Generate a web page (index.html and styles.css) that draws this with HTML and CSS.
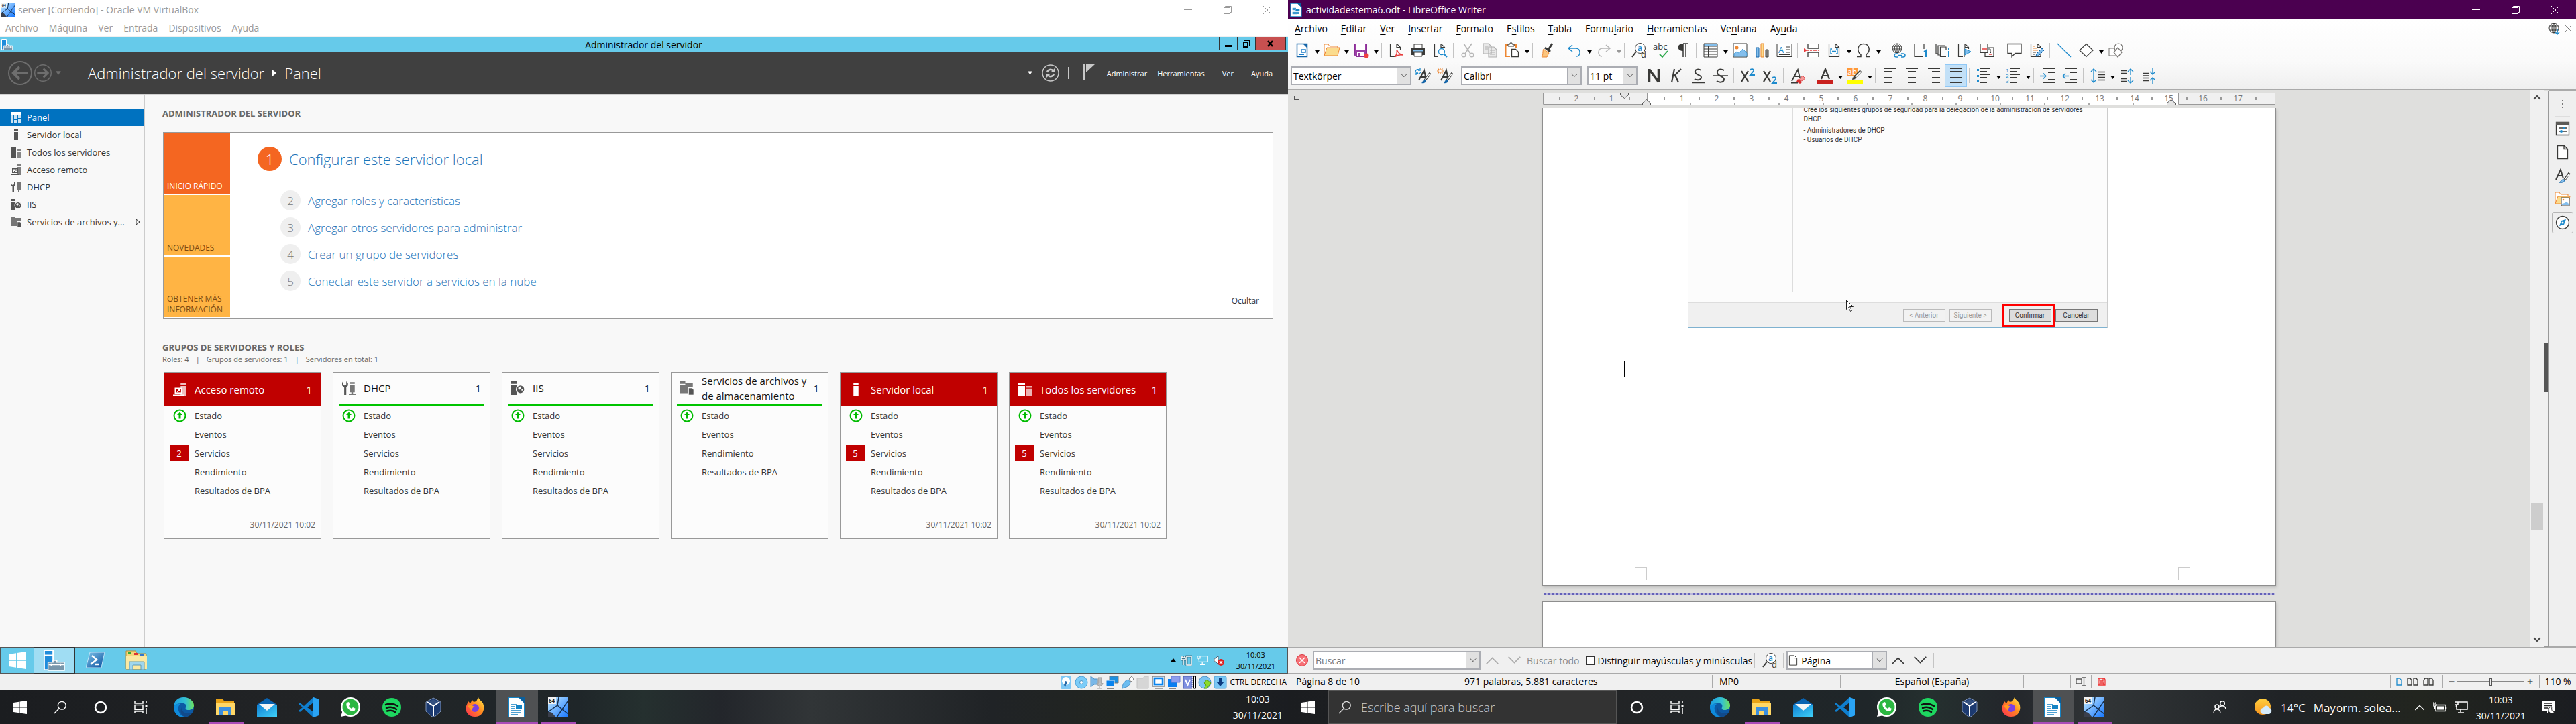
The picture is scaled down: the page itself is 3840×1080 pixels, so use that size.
FILE: index.html
```html
<!DOCTYPE html>
<html lang="es">
<head>
<meta charset="utf-8">
<title>Escritorio</title>
<link rel="stylesheet" href="styles.css">
</head>
<body>
<svg class="sprite" aria-hidden="true">
<defs>
<linearGradient id="gEdge" x1="0" y1="0" x2="1" y2="0"><stop offset="0" stop-color="#1b9de2"/><stop offset=".6" stop-color="#35c1d0"/><stop offset="1" stop-color="#6fe35a"/></linearGradient>
<linearGradient id="gFox" x1="1" y1="0" x2="0" y2="1"><stop offset="0" stop-color="#fff14a"/><stop offset=".45" stop-color="#ff8a1f"/><stop offset="1" stop-color="#ff2a55"/></linearGradient>
<linearGradient id="gSky" x1="0" y1="0" x2="1" y2="1"><stop offset="0" stop-color="#c6ecff"/><stop offset="1" stop-color="#1677ff"/></linearGradient>
<linearGradient id="gMail" x1="0" y1="0" x2="1" y2="1"><stop offset="0" stop-color="#0f7fd4"/><stop offset="1" stop-color="#3fd0f7"/></linearGradient>
<linearGradient id="gSun" x1="0" y1="0" x2="0" y2="1"><stop offset="0" stop-color="#ffcf3f"/><stop offset="1" stop-color="#f7941d"/></linearGradient>
<linearGradient id="gPs" x1="0" y1="0" x2="1" y2="1"><stop offset="0" stop-color="#7fc4ea"/><stop offset="1" stop-color="#0a4f9e"/></linearGradient>
</defs>
<symbol id="min" viewBox="0 0 12 12"><path d="M0 5.500h12" stroke="currentColor"/></symbol>
<symbol id="restore" viewBox="0 0 12 12"><path d="M.5 2.500h9v9h-9zM2.500 2.500v-2h9v9h-2" fill="none" stroke="currentColor"/></symbol>
<symbol id="close" viewBox="0 0 12 12"><path d="M0 0l12 12M12 0L0 12" stroke="currentColor" fill="none"/></symbol>
<symbol id="down" viewBox="0 0 12 8"><path d="M1 1l5 5 5-5" fill="none" stroke="currentColor"/></symbol>
<symbol id="up" viewBox="0 0 12 8"><path d="M1 7l5-5 5 5" fill="none" stroke="currentColor"/></symbol>
<symbol id="caret" viewBox="0 0 8 5"><path d="M0 0h7L3.500 5z" fill="currentColor"/></symbol>
<symbol id="vb64" viewBox="0 0 30 30"><rect width="30" height="30" fill="url(#gSky)"/><path d="M0 21l6 2 6 7H0z" fill="#3a3f4c"/><path d="M16 0l-2 12 7 6L30 5M14 12L0 22M21 18l-8 12M21 18l9 7" stroke="#16304f" stroke-width="1.500" fill="none"/><path d="M0 0h12v10H0z" fill="#f2f2f2"/><text x="1" y="8" font-size="8" font-weight="700" fill="#222">64</text></symbol>
<symbol id="srvmgr" viewBox="0 0 34 34"><path d="M1 1h14v31H1z" fill="#1f8cdb" stroke="#fff" stroke-width="2"/><path d="M1 9h14" stroke="#fff" stroke-width="2"/><path d="M7 20h8v-3h6v3h12v13H7z" fill="#7896ab" stroke="#fff" stroke-width="1.500"/><path d="M8 24h24M12 22v4M27 22v4" stroke="#fff" stroke-width="1.500"/></symbol>
<symbol id="panel" viewBox="0 0 16 16"><path d="M0 0h16v4H0z" fill="currentColor"/><path d="M0 5h4v5H0zM0 11h4v5H0zM5 5h5v6H5zM5 12h5v4H5zM11 5h5v4h-5zM11 10h5v6h-5z" fill="currentColor" opacity=".8"/></symbol>
<symbol id="local" viewBox="0 0 16 16"><path d="M5 0h6v3H5zM5 4h6v12H5z" fill="currentColor"/></symbol>
<symbol id="todos" viewBox="0 0 16 16"><path d="M0 0h8v3H0zM0 4h8v12H0z" fill="currentColor"/><path d="M9 4h7v2H9zM9 7h7v9H9z" fill="currentColor" opacity=".7"/></symbol>
<symbol id="remoto" viewBox="0 0 16 16"><path d="M9 0h7v3H9zM9 4h7v12H9z" fill="currentColor" opacity=".75"/><path d="M2 6h9v7H2zM0 14h13v2H0z" fill="currentColor"/><path d="M3.500 7.500h6v4h-6z" fill="var(--hole)"/><path d="M5 11l3-3M6 8h2v2" stroke="currentColor" fill="none"/></symbol>
<symbol id="dhcp" viewBox="0 0 16 16"><path d="M1 0v4l2 1 2-1V0l2 2v3L5 7v9H2.500V7L0 5V2z" fill="currentColor"/><path d="M9 1h6v2H9zM9 4h6v9H9zM11 13h2v2h3v1H8v-1h3z" fill="currentColor" opacity=".8"/></symbol>
<symbol id="iis" viewBox="0 0 16 16"><path d="M0 0h7v3H0zM0 4h7v12H0z" fill="currentColor"/><circle cx="11" cy="9.500" r="5" fill="currentColor" stroke="var(--hole)"/><path d="M8 8l3-2 1 2-2 2zM12 10l2-1-1 3z" fill="var(--hole)"/></symbol>
<symbol id="files" viewBox="0 0 16 16"><path d="M0 0h6v3H0zM0 4h6V2h9v5h-6v7H0z" fill="currentColor" opacity=".8"/><path d="M10 8h4l2 2v6h-6z" fill="currentColor" stroke="var(--hole)" stroke-width=".500"/></symbol>
<symbol id="okUp" viewBox="0 0 20 20"><circle cx="10" cy="10" r="8.500" fill="#fff" stroke="#0b0" stroke-width="2"/><path d="M10 4.500l4 4.500h-2.500v5.500h-3V9H6z" fill="#0b0"/></symbol>
<symbol id="back" viewBox="0 0 36 36"><circle cx="18" cy="18" r="17" fill="none" stroke="currentColor" stroke-width="2"/><path d="M30 18H8M17 9l-9 9 9 9" fill="none" stroke="currentColor" stroke-width="4"/></symbol>
<symbol id="refresh" viewBox="0 0 26 26"><circle cx="13" cy="13" r="12" fill="none" stroke="currentColor" stroke-width="1.500"/><path d="M8 12a5 5 0 0 1 9-2M18 14a5 5 0 0 1-9 2" fill="none" stroke="currentColor" stroke-width="2.500"/><path d="M19 6v6h-6zM7 20v-6h6z" fill="currentColor"/></symbol>
<symbol id="flag" viewBox="0 0 18 24"><path d="M1 0h3v24H1z" fill="currentColor"/><path d="M5 1h13L5 13z" fill="currentColor"/></symbol>
<symbol id="win" viewBox="0 0 20 20"><path d="M0 3l8.500-1.300V9.500H0zM9.500 1.500L20 0v9.500H9.500zM0 10.500h8.500v7.800L0 17zM9.500 10.500H20V20L9.500 18.500z" fill="#fff"/></symbol>
<symbol id="ps" viewBox="0 0 28 24"><path d="M6 0h22l-5 23H0z" fill="url(#gPs)" stroke="#bfe4f7"/><path d="M9 5l7 6-9 7M14 18h6" fill="none" stroke="#fff" stroke-width="2.500"/></symbol>
<symbol id="oldfolder" viewBox="0 0 34 30"><path d="M1 1h14l2 4h14v23H1z" fill="#f5d77a" stroke="#b98e33"/><path d="M4 2h5v3H4z" fill="#3a3"/><path d="M13 4h5v3h-5z" fill="#d33"/><path d="M22 6h6v3h-6z" fill="#37c"/><path d="M1 9h31v19H1z" fill="#fbe9a2"/><path d="M6 29V17h22v12h-5v-7H11v7z" fill="#9fd6ee" stroke="#5a9ab8"/></symbol>
<symbol id="search" viewBox="0 0 22 22"><circle cx="13.500" cy="8" r="6.500" fill="none" stroke="currentColor" stroke-width="1.500"/><path d="M9 13l-8 8" stroke="currentColor" stroke-width="1.500"/></symbol>
<symbol id="cortana" viewBox="0 0 20 20"><circle cx="10" cy="10" r="8" fill="none" stroke="#fff" stroke-width="2.500"/></symbol>
<symbol id="tasks" viewBox="0 0 20 20"><path d="M1 1v3h12V1M1 19v-3h12v3M1 6.500h12v7H1zM18 0v4M18 11v9" fill="none" stroke="#fff" stroke-width="1.500"/><path d="M16.500 6h3v3h-3z" fill="#fff"/></symbol>
<symbol id="edge" viewBox="0 0 30 30"><circle cx="15" cy="15" r="15" fill="#0c59a4"/><path d="M0 15C0 5 7 0 15 0s15 6 15 12c0 5-4 7-8 7s-5-2-4-4c2-5-3-7-7-6C5 9 1 12 0 15z" fill="url(#gEdge)"/><path d="M0 15c1-4 6-6 10-5-4 3-4 8-2 12 2 5 6 7 10 7.600C8 32 0 24 0 15z" fill="#0f8bdc"/><path d="M12 15c-1 6 5 11 15 8-3 4-7 6-10 6-7-2-8-9-5-14z" fill="#114a8b"/></symbol>
<symbol id="folder" viewBox="0 0 30 30"><path d="M1 3h10l3 3h14v5H1z" fill="#e8a317"/><path d="M1 8h28v18H1z" fill="#ffd766"/><path d="M6 27V15h18v12h-5v-6h-8v6z" fill="#3b8fe0"/></symbol>
<symbol id="mail" viewBox="0 0 30 30"><path d="M0 11L15 1l15 10z" fill="#0a63b0"/><path d="M0 11h30v18H0z" fill="url(#gMail)"/><path d="M3 10h24L15 20z" fill="#f5f5f5"/></symbol>
<symbol id="vscode" viewBox="0 0 30 30"><path d="M22 0l8 3v24l-8 3L8 17l-6 5-2-2 6-5-6-5 2-2 6 5z" fill="#0f7fcf"/><path d="M22 8v14l-9-7z" fill="#1e2124"/><path d="M22 0l8 3v24l-8 3z" fill="#2aa4f4"/></symbol>
<symbol id="whats" viewBox="0 0 30 30"><circle cx="15.500" cy="14.500" r="14.500" fill="#fff"/><path d="M1 29l3-10 7 8z" fill="#fff"/><circle cx="15.500" cy="14.500" r="12" fill="#2cb742"/><path d="M10 8c-3 5 4 14 11 13l2-4-4-2-2 2c-2-1-3-3-4-4l1.500-2L13 7z" fill="#fff"/></symbol>
<symbol id="spot" viewBox="0 0 30 30"><circle cx="15" cy="15" r="14" fill="#1ed760"/><path d="M6 11c6-2 13-1 18 2M7 16c5-2 11-1 15 2M8 20.500c4-1 9-1 12 1.500" fill="none" stroke="#111" stroke-width="2.500" stroke-linecap="round"/></symbol>
<symbol id="vbox" viewBox="0 0 30 30"><path d="M15 1l11 6v14l-9 8h-4l-9-8V7z" fill="#1c3a70" stroke="#7f93b5"/><path d="M15 3l8 4-8 5-8-5z" fill="#34507f"/><path d="M15 13l9-6M15 13L6 7M15 13v15" stroke="#fff" stroke-width="2" fill="none"/></symbol>
<symbol id="fox" viewBox="0 0 30 30"><path d="M5 6l3 3 3-5 2 3 4-1 3-6c1 4 5 5 7 9 4 9-1 20-12 20C5 29 0 22 2 13z" fill="url(#gFox)"/><circle cx="15" cy="16" r="6" fill="#7a3fe0"/><path d="M4 13c5-3 8 0 11 1-3 0-4 3-5 6z" fill="#ff9a1f"/></symbol>
<symbol id="writer" viewBox="0 0 30 30"><path d="M3 0h16l8 8v22H3z" fill="#fff" stroke="#1583c4" stroke-width="2"/><path d="M18 0h9v9z" fill="#0b5f9c"/><path d="M7 11h8M7 14h5M7 17h5M7 20h15M7 23h15M7 26h10" stroke="#1583c4" stroke-width="1.500"/><path d="M14 12h9v6h-9z" fill="#1583c4"/></symbol>
<symbol id="people" viewBox="0 0 20 20"><circle cx="6" cy="9" r="3" fill="none" stroke="#fff" stroke-width="1.500"/><circle cx="14" cy="4" r="3.300" fill="none" stroke="#fff" stroke-width="1.500"/><path d="M1 19c0-8 10-8 10 0M9 10c4-4 10-2 10 3" fill="none" stroke="#fff" stroke-width="1.500"/></symbol>
<symbol id="sun" viewBox="0 0 26 26"><circle cx="12" cy="12" r="12" fill="url(#gSun)"/><path d="M13 23a4.500 4.500 0 0 1 0-9c2-5 8-4 9 0 5 1 4 9-1 9z" fill="#d5ebfb"/></symbol>
<symbol id="batt" viewBox="0 0 20 16"><path d="M4 4.500h14v9H4zM18.500 7v4" fill="none" stroke="#fff" stroke-width="1.500"/><path d="M6 6.500h10v5H6z" fill="#fff"/><path d="M1 0v3M4 0v3M0 3h5v3H0zM2.500 6v5" stroke="#fff" fill="none"/></symbol>
<symbol id="net" viewBox="0 0 20 18"><path d="M5 1h14v11H3V8M9 12v4M5 17h9M0 1h5v4H0zM2.500 5v4" fill="none" stroke="currentColor" stroke-width="1.500"/></symbol>
<symbol id="note" viewBox="0 0 20 20"><path d="M0 0h19v15h-7l-4 4v-4H0z" fill="#fff"/><path d="M4 4h11M4 7.500h11M4 11h6" stroke="#222" stroke-width="1.500"/><path d="M15 9a5 5 0 1 0 4 8c-4 0-5-4-4-8z" fill="#fff" stroke="#222"/></symbol>
<!-- iconos de Writer -->
<symbol id="w-new" viewBox="0 0 24 24"><path d="M4.500 2.500h15v19h-15z" fill="#fff" stroke="#1565a8" stroke-width="1.500"/><path d="M13 2h7v7z" fill="#1565a8"/><path d="M7 8.500h5M7 11.500h3M7 14.500h3M7 18.500h8" stroke="#1c7ec9"/><path d="M11 11h6v4h-6z" fill="none" stroke="#1c7ec9" stroke-width="1.500"/></symbol>
<symbol id="w-open" viewBox="0 0 24 24"><path d="M1 20V3h6l2 3h12v3" fill="#fff" stroke="#ed8733"/><path d="M5 8h19l-3 12H1z" fill="#fbdc8e" stroke="#ed8733"/></symbol>
<symbol id="w-save" viewBox="0 0 24 24"><path d="M2.500 2.500h18v19h-16l-2-2z" fill="#9b3fa5" stroke="#8a2f96"/><path d="M5 3h13v9H5z" fill="#fff"/><path d="M6 15h11v6H6z" fill="#fff"/><path d="M8 16h3v5H8z" fill="#9b3fa5"/><circle cx="20" cy="20" r="3.500" fill="#f04040"/></symbol>
<symbol id="w-pdf" viewBox="0 0 24 24"><path d="M10 21.500H3.500v-19h10l5 5V12M13 2.500v5h5" fill="none" stroke="#3a3a38" stroke-width="1.200"/><path d="M13 11c3 6 5 7 9 8-5-1-8 0-12 3 3-3 4-7 3-11z" fill="#fff" stroke="#e63c3c" stroke-width="1.500"/></symbol>
<symbol id="w-print" viewBox="0 0 24 24"><path d="M6 8V3h12v5" fill="#fff" stroke="#3a3a38"/><path d="M2 8h20v11H2z" fill="#3a3a38"/><path d="M5 12.500h14" stroke="#83beec" stroke-width="2"/><path d="M6 15h12v6H6z" fill="#fff" stroke="#3a3a38"/></symbol>
<symbol id="w-preview" viewBox="0 0 24 24"><path d="M9 21.500H3.500v-19h10l5 5V9M13 2.500v5h5" fill="none" stroke="#3a3a38" stroke-width="1.200"/><circle cx="14" cy="14" r="4.500" fill="#fff" stroke="#1e8bcd" stroke-width="1.300"/><path d="M17 17l5 5" stroke="#1e8bcd" stroke-width="2"/></symbol>
<symbol id="w-cut" viewBox="0 0 24 24"><path d="M6 2l10 15M18 2L8 17" stroke="#b8b8b8" stroke-width="1.700"/><circle cx="6" cy="19" r="2.800" fill="none" stroke="#b8b8b8" stroke-width="1.500"/><circle cx="18" cy="19" r="2.800" fill="none" stroke="#b8b8b8" stroke-width="1.500"/></symbol>
<symbol id="w-copy" viewBox="0 0 24 24"><path d="M2 2h8l4 4v11H2zM10 7h8l4 4v11H10z" fill="#e8e8e8" stroke="#b0b0b0" stroke-width="1.200"/><path d="M12 12h7M12 15h8M12 18h8M4 7h5M4 10h5" stroke="#b0b0b0"/></symbol>
<symbol id="w-paste" viewBox="0 0 24 24"><path d="M9 21H2.500V4H18v5" fill="#fff" stroke="#ed8733" stroke-width="2"/><path d="M6 6V3h3V1h3v2h3v3z" fill="#fff" stroke="#3a3a38"/><path d="M11.500 10.500h6l4 4v7h-10z" fill="#fff" stroke="#3a3a38" stroke-width="1.300"/></symbol>
<symbol id="w-brush" viewBox="0 0 24 24"><path d="M20 2l-6 9M9 8l8 6" stroke="#3a3a38" stroke-width="3"/><path d="M7 10l8 6-3 6H4c3-3 1-8 3-12z" fill="#fbc57e" stroke="#ed8733"/></symbol>
<symbol id="w-undo" viewBox="0 0 24 24"><path d="M9 4L3 9l6 5M4 9h10c8 0 8 12 1 12" fill="none" stroke="#1e8bcd" stroke-width="1.500"/></symbol>
<symbol id="w-redo" viewBox="0 0 24 24"><path d="M15 4l6 5-6 5M20 9H10C2 9 2 21 9 21" fill="none" stroke="#b5b5b5" stroke-width="1.500"/></symbol>
<symbol id="w-find" viewBox="0 0 24 24"><circle cx="14" cy="9" r="7.500" fill="#fff" stroke="#3a3a38"/><path d="M8 14l-6 8" stroke="#3a3a38" stroke-width="2"/><text x="10" y="13" font-size="12" fill="#1e8bcd" font-weight="600">a</text><text x="15" y="23" font-size="13" fill="#3a3a38">d</text></symbol>
<symbol id="w-abc" viewBox="0 0 24 24"><text x="0" y="11" font-size="13" fill="#3a3a38">abc</text><path d="M10 18l4 4 8-9" fill="none" stroke="#2ba84a" stroke-width="1.800"/></symbol>
<symbol id="w-pil" viewBox="0 0 24 24"><path d="M12 2h8M12 2v20M16 2v20" stroke="#3a3a38" stroke-width="1.500"/><path d="M12 2v11C2 13 2 2 12 2z" fill="#3a3a38"/></symbol>
<symbol id="w-table" viewBox="0 0 24 24"><path d="M2 2h20v4H2z" fill="#83beec"/><path d="M2 2h20v20H2zM2 6h20M2 10h20M2 14h20M2 18h20M8.500 6v16M15.500 6v16" fill="none" stroke="#3a3a38"/></symbol>
<symbol id="w-image" viewBox="0 0 24 24"><path d="M2 2h20v20H2z" fill="#fff" stroke="#3a3a38"/><circle cx="7" cy="8" r="2.500" fill="#ed8733"/><path d="M3 21v-4l4-3 3 2 6-6 6 6v5z" fill="#83beec" stroke="#1e8bcd" stroke-width=".7"/></symbol>
<symbol id="w-chart" viewBox="0 0 24 24"><path d="M3 8h4v14H3z" fill="#83beec" stroke="#1565a8"/><path d="M10 2h4v20h-4z" fill="#fbdc8e" stroke="#ed8733"/><path d="M17 11h4v11h-4z" fill="#797774" stroke="#3a3a38"/></symbol>
<symbol id="w-box" viewBox="0 0 24 24"><path d="M1 2.500h22v19H1z" fill="#fff" stroke="#3a3a38"/><text x="3" y="16" font-size="13" fill="#1e8bcd">A</text><path d="M14 7h7M14 11h7M14 15h7M4 18.500h17" stroke="#3a3a38"/></symbol>
<symbol id="w-break" viewBox="0 0 24 24"><path d="M6 2v7h16V2M6 22v-7h16v7" fill="#fff" stroke="#3a3a38" stroke-width="1.300"/><path d="M5 12h18" stroke="#e63c3c" stroke-width="1.500" stroke-dasharray="3 1"/><path d="M0 9l5 3-5 3z" fill="#e63c3c"/></symbol>
<symbol id="w-field" viewBox="0 0 24 24"><path d="M4.500 2.500h10l5 5v14h-15zM14 2.500v5h5" fill="none" stroke="#3a3a38" stroke-width="1.200"/><path d="M9 10H7v7h2M15 10h2v7h-2M9 13.500h6" fill="none" stroke="#1e8bcd" stroke-width="1.300"/></symbol>
<symbol id="w-omega" viewBox="0 0 24 24"><path d="M2 21.500h6v-3C1 13 3 2.500 12 2.500S23 13 16 18.500v3h6" fill="none" stroke="#3a3a38" stroke-width="1.500"/></symbol>
<symbol id="w-link" viewBox="0 0 24 24"><path d="M3 9a7 7 0 1 1 14 0 7 7 0 1 1-14 0zM3.500 6h13M3 10h14M10 2v14M10 2c-5 4-5 10 0 14M10 2c5 4 5 10 0 14" fill="none" stroke="#3a3a38"/><path d="M12 17H9c-4 0-4 5 0 5h3M16 17h3c4 0 4 5 0 5h-3M11 19.500h6" fill="none" stroke="#1e8bcd" stroke-width="1.500"/></symbol>
<symbol id="w-foot" viewBox="0 0 24 24"><path d="M17 10V2.500H3v19h12" fill="none" stroke="#3a3a38" stroke-width="1.200"/><path d="M17 14l3-2v10" fill="none" stroke="#1e8bcd" stroke-width="2"/></symbol>
<symbol id="w-end" viewBox="0 0 24 24"><path d="M5 17H2V2.500h10M8 19H5V5h10M17 12V7H8.500v14.500H17" fill="none" stroke="#3a3a38" stroke-width="1.200"/><path d="M21 13v9M21 9v2" stroke="#1e8bcd" stroke-width="2"/></symbol>
<symbol id="w-mark" viewBox="0 0 24 24"><path d="M9 21.500H2.500v-19h10l5 5V10M12 2.500v5h5M11 9v13" fill="none" stroke="#3a3a38" stroke-width="1.200"/><path d="M12 10l9 4-9 5z" fill="#83beec" stroke="#1e8bcd"/></symbol>
<symbol id="w-cross" viewBox="0 0 24 24"><path d="M2 2.500h11v13H2zM13 8h9v13.500H9V16" fill="none" stroke="#3a3a38" stroke-width="1.200"/><path d="M4 10h8M15 18h5" stroke="#e63c3c" stroke-width="1.500"/><path d="M14 10h3v6M15 14l2 2 2-2" stroke="#3a3a38" fill="none"/></symbol>
<symbol id="w-comment" viewBox="0 0 24 24"><path d="M2 2.500h20v14h-9l-5 5v-5H2z" fill="#fff" stroke="#3a3a38" stroke-width="1.300"/></symbol>
<symbol id="w-track" viewBox="0 0 24 24"><path d="M18 14v7.500H3.500v-19h10l5 5M13 2.500v5h5" fill="none" stroke="#3a3a38" stroke-width="1.200"/><path d="M6 6h4M6 9h6M6 12h8" stroke="#ed8733" stroke-width="1.200"/><path d="M6 15h5M6 18h4" stroke="#3a3a38"/><path d="M11 21l1-4 8-8 3 3-8 8z" fill="#83beec" stroke="#1565a8"/></symbol>
<symbol id="w-line" viewBox="0 0 24 24"><path d="M2 2l20 20" stroke="#1e8bcd" stroke-width="1.300"/></symbol>
<symbol id="w-diam" viewBox="0 0 24 24"><path d="M12 2.500l10 9.500-10 9.500L2 12z" fill="#fff" stroke="#3a3a38" stroke-width="1.200"/></symbol>
<symbol id="w-shapes" viewBox="0 0 24 24"><path d="M2 9h11v11H2z" fill="#fff" stroke="#797774"/><circle cx="16" cy="8" r="6" fill="#fff" stroke="#797774" stroke-width="1.200"/><path d="M15 8l6 7-6 7-6-7z" fill="#fff" stroke="#797774" stroke-width="1.200"/></symbol>
<symbol id="w-upd" viewBox="0 0 24 24"><path d="M6 19L14 4l3 14M8 14h8" fill="none" stroke="#3a3a38" stroke-width="2"/><path d="M23 8l-8 11" stroke="#3a3a38" stroke-width="3.500"/><path d="M22.500 9l-7 9" stroke="#fff" stroke-width="1.500"/><path d="M10 23c2-1 2-6 6-5 2 3-1 6-6 5z" fill="#1565a8"/><path d="M1 6a4 4 0 0 1 7-2M9 6a4 4 0 0 1-7 2M8 1v3H5M2 11V8h3" fill="none" stroke="#1e8bcd" stroke-width="1.300"/></symbol>
<symbol id="w-newst" viewBox="0 0 24 24"><path d="M6 19L14 4l3 14M8 14h8" fill="none" stroke="#3a3a38" stroke-width="2"/><path d="M23 8l-8 11" stroke="#3a3a38" stroke-width="3.500"/><path d="M22.500 9l-7 9" stroke="#fff" stroke-width="1.500"/><path d="M10 23c2-1 2-6 6-5 2 3-1 6-6 5z" fill="#1565a8"/><path d="M5 0v10M0 5h10M1.500 1.500l7 7M8.500 1.500l-7 7" stroke="#ed8733" stroke-width="1.200"/><circle cx="5" cy="5" r="2" fill="#fff"/></symbol>
<symbol id="w-bold" viewBox="0 0 24 24"><path d="M4.500 22V2M4.500 2.500l14 19M18.500 22V2" fill="none" stroke="#3a3a38" stroke-width="3.500"/></symbol>
<symbol id="w-ital" viewBox="0 0 24 24"><path d="M9 2L5 22M19 2L8 13M10 11l5 11" fill="none" stroke="#3a3a38" stroke-width="2.200"/></symbol>
<symbol id="w-under" viewBox="0 0 24 24"><path d="M16 4C11 1 6 3 7 7s10 4 9 8-7 4-10 2" fill="none" stroke="#3a3a38" stroke-width="2"/><path d="M2 22.500h20" stroke="#3a3a38" stroke-width="1.500"/></symbol>
<symbol id="w-strike" viewBox="0 0 24 24"><path d="M17 4C11 1 6 3 7 8s11 5 10 10-8 4-11 2" fill="none" stroke="#3a3a38" stroke-width="2"/><path d="M1 12h22" stroke="#3a3a38" stroke-width="1.500"/></symbol>
<symbol id="w-sup" viewBox="0 0 24 24"><path d="M2 5l10 16M12 5L2 21" stroke="#3a3a38" stroke-width="2.300"/><path d="M15 4c1-3 6-2 5 1l-5 6h7" fill="none" stroke="#1e8bcd" stroke-width="1.800"/></symbol>
<symbol id="w-sub" viewBox="0 0 24 24"><path d="M2 5l10 16M12 5L2 21" stroke="#3a3a38" stroke-width="2.300"/><path d="M15 16c1-3 6-2 5 1l-5 6h7" fill="none" stroke="#1e8bcd" stroke-width="1.800"/></symbol>
<symbol id="w-clear" viewBox="0 0 24 24"><path d="M3 20L12 3l3 12M7 13h8M2 22.500h10" fill="none" stroke="#3a3a38" stroke-width="1.800"/><path d="M19 12l4 4-5 4-5-1z" fill="#f59a9a" stroke="#e05555"/><path d="M12 17l6 5-3 2-5-3z" fill="#d82c2c"/></symbol>
<symbol id="w-color" viewBox="0 0 24 24"><path d="M6 17l6-15 6 15M8 12h8" fill="none" stroke="#3a3a38" stroke-width="2.200"/><path d="M0 19h24v6H0z" fill="#c9211e"/></symbol>
<symbol id="w-high" viewBox="0 0 24 24"><path d="M1 1h16v12H1z" fill="#ff9838"/><text x="1" y="11" font-size="12" fill="#fff">ab</text><path d="M21 5L11 15" stroke="#3a3a38" stroke-width="4"/><path d="M21 6l-8 8" stroke="#fff" stroke-width="1.800"/><path d="M9 14l4 3-5 1z" fill="#3a3a38"/><path d="M0 19h24v6H0z" fill="#ff0"/></symbol>
<symbol id="w-left" viewBox="0 0 24 24"><path d="M3 1.500h18M3 5.500h12M3 9.500h18M3 14.500h12M3 18.500h18M3 22.500h12" stroke="#3a3a38" stroke-width="1.200"/></symbol>
<symbol id="w-center" viewBox="0 0 24 24"><path d="M3 1.500h18M6 5.500h12M3 9.500h18M6 14.500h12M3 18.500h18M6 22.500h12" stroke="#3a3a38" stroke-width="1.200"/></symbol>
<symbol id="w-right" viewBox="0 0 24 24"><path d="M3 1.500h18M9 5.500h12M3 9.500h18M9 14.500h12M3 18.500h18M9 22.500h12" stroke="#3a3a38" stroke-width="1.200"/></symbol>
<symbol id="w-just" viewBox="0 0 24 24"><path d="M3 1.500h18M3 5.500h18M3 9.500h18M3 14.500h18M3 18.500h18M3 22.500h18" stroke="#3a3a38" stroke-width="1.200"/></symbol>
<symbol id="w-bul" viewBox="0 0 24 24"><path d="M7 1.500h15M7 5.500h10M7 10.500h15M7 14.500h10M7 18.500h15M7 22.500h10" stroke="#3a3a38" stroke-width="1.200"/><path d="M2 2h3v3H2zM2 11h3v3H2zM2 19h3v3H2z" fill="#1e8bcd"/></symbol>
<symbol id="w-num" viewBox="0 0 24 24"><path d="M7 1.500h15M7 5.500h10M7 10.500h15M7 14.500h10M7 18.500h15M7 22.500h10" stroke="#3a3a38" stroke-width="1.200"/><g font-size="8" fill="#1e8bcd"><text x="1" y="7">1</text><text x="1" y="15">2</text><text x="1" y="23">3</text></g></symbol>
<symbol id="w-ind" viewBox="0 0 24 24"><path d="M4 1.500h18M12 7.500h10M12 12.500h10M12 17.500h10M4 22.500h18" stroke="#3a3a38" stroke-width="1.200"/><path d="M0 12.500h9M5 8.500l4 4-4 4" fill="none" stroke="#1e8bcd" stroke-width="1.300"/></symbol>
<symbol id="w-out" viewBox="0 0 24 24"><path d="M4 1.500h18M12 7.500h10M12 12.500h10M12 17.500h10M4 22.500h18" stroke="#3a3a38" stroke-width="1.200"/><path d="M1 12.500h9M5 8.500l-4 4 4 4" fill="none" stroke="#1e8bcd" stroke-width="1.300"/></symbol>
<symbol id="w-space" viewBox="0 0 24 24"><path d="M13 6.500h10M13 10.500h10M13 14.500h10M13 18.500h10" stroke="#3a3a38" stroke-width="1.300"/><path d="M6 2v20M2 6l4-4 4 4M2 18l4 4 4-4" fill="none" stroke="#1e8bcd" stroke-width="1.300"/></symbol>
<symbol id="w-inc" viewBox="0 0 24 24"><path d="M2 4.500h9M2 8.500h9M2 16.500h9M2 20.500h9" stroke="#3a3a38" stroke-width="1.300"/><path d="M17 11V2M13 6l4-4 4 4M17 14v9M13 19l4 4 4-4" fill="none" stroke="#1e8bcd" stroke-width="1.300"/></symbol>
<symbol id="w-dec" viewBox="0 0 24 24"><path d="M2 8.500h9M2 12h9M2 15.500h9M2 19.500h9" stroke="#3a3a38" stroke-width="1.300"/><path d="M17 1v9M13 6l4 4 4-4M17 24v-9M13 19l4-4 4 4" fill="none" stroke="#1e8bcd" stroke-width="1.300"/></symbol>
<symbol id="s-prop" viewBox="0 0 24 24"><path d="M2.500 2.500h19v19h-19z" fill="#fff" stroke="#3a3a38" stroke-width="1.300"/><path d="M2 2h20v4H2z" fill="#5c5b58"/><path d="M6 11h12M6 16h12" stroke="#3a3a38" stroke-width="1.300"/><circle cx="14" cy="11" r="2" fill="#1e8bcd"/><circle cx="10" cy="16" r="2" fill="#1e8bcd"/></symbol>
<symbol id="s-page" viewBox="0 0 24 24"><path d="M4.500 2.500h10l5 5v14h-15zM14 2.500v5h5" fill="#fff" stroke="#3a3a38" stroke-width="1.300"/></symbol>
<symbol id="s-style" viewBox="0 0 24 24"><path d="M2 18L9 3l4 13M5 12h7" fill="none" stroke="#3a3a38" stroke-width="2"/><path d="M22 8l-7 10" stroke="#3a3a38" stroke-width="3.500"/><path d="M22 9l-6 8" stroke="#fff" stroke-width="1.500"/><path d="M7 22c3-1 3-5 7-4 2 3-2 5-7 4z" fill="#83beec" stroke="#1565a8"/></symbol>
<symbol id="s-gal" viewBox="0 0 24 24"><path d="M1 19V2h6l2 3h11v3" fill="#fff" stroke="#ed8733"/><path d="M5 8h18l-3 11H1z" fill="#fbdc8e" stroke="#ed8733"/><path d="M10 10h12v12H10z" fill="#fff" stroke="#3a3a38"/><circle cx="13" cy="13" r="1.300" fill="#ed8733"/><path d="M11 21v-2l4-1 3-2 3 3v2z" fill="#83beec"/></symbol>
<symbol id="s-nav" viewBox="0 0 24 24"><circle cx="12" cy="12" r="9.500" fill="#fff" stroke="#3a3a38" stroke-width="1.300"/><path d="M17 7l-3 8-7 2 3-8z" fill="#1e8bcd"/><circle cx="12" cy="12" r="1.500" fill="#fff"/></symbol>
<symbol id="globe" viewBox="0 0 18 18"><path d="M1 8a7 7 0 1 1 14 0 7 7 0 1 1-14 0zM1.500 5h13M1.500 11h13M8 1v14M8 1C4 4 4 12 8 15M8 1c4 3 4 11 0 14" fill="none" stroke="#3a3a38"/><path d="M13 9v8M10 14l3 3 3-3" fill="none" stroke="#1e8bcd" stroke-width="1.500"/></symbol>
</svg>

<main class="desk">
<section class="screen">
  <header class="wintitle">
    <svg class="i20"><use href="#vb64"/></svg><span class="grow">server [Corriendo] - Oracle VM VirtualBox</span>
    <button class="wc" aria-label="Minimizar"><svg class="i12"><use href="#min"/></svg></button><button class="wc" aria-label="Restaurar"><svg class="i12"><use href="#restore"/></svg></button><button class="wc" aria-label="Cerrar"><svg class="i12"><use href="#close"/></svg></button>
  </header>
  <nav class="vbmenu"><a href="#">Archivo</a><a href="#">Máquina</a><a href="#">Ver</a><a href="#">Entrada</a><a href="#">Dispositivos</a><a href="#">Ayuda</a></nav>
  <div class="vm">
    <header class="smtitle"><svg class="i17"><use href="#srvmgr"/></svg><span>Administrador del servidor</span>
      <div class="smctl"><button aria-label="Minimizar"><svg class="i12" viewBox="0 0 12 12"><path d="M1 8h10v3H1z"/></svg></button><button aria-label="Restaurar"><svg class="i12" viewBox="0 0 12 12"><path d="M2 4h6v7H2zM4 2V1h7v8h-1" fill="none" stroke="#000" stroke-width="2"/></svg></button><button class="x" aria-label="Cerrar"><svg class="i12" viewBox="0 0 12 12"><path d="M2 2l7 8M9 2l-7 8" stroke="#000" stroke-width="2.500"/></svg></button></div></header>
    <header class="smhead">
      <button class="nb" aria-label="Atrás"><svg class="i36"><use href="#back"/></svg></button>
      <button class="nb fwd" aria-label="Adelante"><svg class="i26"><use href="#back"/></svg></button>
      <svg class="cr"><use href="#caret"/></svg>
      <h1>Administrador del servidor</h1><svg class="i8 bc" viewBox="0 0 8 10"><path d="M1 0l6 5-6 5z" fill="#fff"/></svg><h1 class="grow">Panel</h1>
      <div class="smtools"><svg class="cr"><use href="#caret"/></svg><button aria-label="Actualizar"><svg class="i26"><use href="#refresh"/></svg></button><i></i><button aria-label="Notificaciones"><svg class="flag"><use href="#flag"/></svg></button></div>
      <nav class="smmenu"><a href="#">Administrar</a><a href="#">Herramientas</a><a href="#">Ver</a><a href="#">Ayuda</a></nav>
    </header>
    <div class="smbody">
      <nav class="side">
        <a href="#" class="on"><svg class="i16"><use href="#panel"/></svg>Panel</a>
        <a href="#"><svg class="i16"><use href="#local"/></svg>Servidor local</a>
        <a href="#"><svg class="i16"><use href="#todos"/></svg>Todos los servidores</a>
        <a href="#"><svg class="i16"><use href="#remoto"/></svg>Acceso remoto</a>
        <a href="#"><svg class="i16"><use href="#dhcp"/></svg>DHCP</a>
        <a href="#"><svg class="i16"><use href="#iis"/></svg>IIS</a>
        <a href="#"><svg class="i16"><use href="#files"/></svg><span class="grow">Servicios de archivos y...</span><svg class="i8" viewBox="0 0 8 10"><path d="M1 1l5 4-5 4z" fill="none" stroke="#333"/></svg></a>
      </nav>
      <div class="content">
        <h2>ADMINISTRADOR DEL SERVIDOR</h2>
        <section class="welcome">
          <div class="tiles"><a href="#" class="hot">INICIO RÁPIDO</a><a href="#">NOVEDADES</a><a href="#">OBTENER MÁS<br>INFORMACIÓN</a></div>
          <ol>
            <li class="first"><b>1</b><a href="#">Configurar este servidor local</a></li>
            <li><b>2</b><a href="#">Agregar roles y características</a></li>
            <li><b>3</b><a href="#">Agregar otros servidores para administrar</a></li>
            <li><b>4</b><a href="#">Crear un grupo de servidores</a></li>
            <li><b>5</b><a href="#">Conectar este servidor a servicios en la nube</a></li>
          </ol>
          <button class="hide">Ocultar</button>
        </section>
        <h2>GRUPOS DE SERVIDORES Y ROLES</h2>
        <p class="sum"><span>Roles: 4</span><span>|</span><span>Grupos de servidores: 1</span><span>|</span><span>Servidores en total: 1</span></p>
        <div class="cards">
          <article class="card bad"><header><svg class="i20"><use href="#remoto"/></svg><h3>Acceso remoto</h3><span>1</span></header>
            <ul><li><svg class="i20"><use href="#okUp"/></svg>Estado</li><li>Eventos</li><li><em>2</em>Servicios</li><li>Rendimiento</li><li>Resultados de BPA</li></ul><time>30/11/2021 10:02</time></article>
          <article class="card"><header><svg class="i20"><use href="#dhcp"/></svg><h3>DHCP</h3><span>1</span></header>
            <ul><li><svg class="i20"><use href="#okUp"/></svg>Estado</li><li>Eventos</li><li>Servicios</li><li>Rendimiento</li><li>Resultados de BPA</li></ul></article>
          <article class="card"><header><svg class="i20"><use href="#iis"/></svg><h3>IIS</h3><span>1</span></header>
            <ul><li><svg class="i20"><use href="#okUp"/></svg>Estado</li><li>Eventos</li><li>Servicios</li><li>Rendimiento</li><li>Resultados de BPA</li></ul></article>
          <article class="card"><header><svg class="i20"><use href="#files"/></svg><h3>Servicios de archivos y<br>de almacenamiento</h3><span>1</span></header>
            <ul><li><svg class="i20"><use href="#okUp"/></svg>Estado</li><li>Eventos</li><li>Rendimiento</li><li>Resultados de BPA</li></ul></article>
          <article class="card bad"><header><svg class="i20"><use href="#local"/></svg><h3>Servidor local</h3><span>1</span></header>
            <ul><li><svg class="i20"><use href="#okUp"/></svg>Estado</li><li>Eventos</li><li><em>5</em>Servicios</li><li>Rendimiento</li><li>Resultados de BPA</li></ul><time>30/11/2021 10:02</time></article>
          <article class="card bad"><header><svg class="i20"><use href="#todos"/></svg><h3>Todos los servidores</h3><span>1</span></header>
            <ul><li><svg class="i20"><use href="#okUp"/></svg>Estado</li><li>Eventos</li><li><em>5</em>Servicios</li><li>Rendimiento</li><li>Resultados de BPA</li></ul><time>30/11/2021 10:02</time></article>
        </div>
      </div>
    </div>
    <footer class="vmbar">
      <button class="st" aria-label="Inicio"><svg class="i28"><use href="#win"/></svg></button><button class="on" aria-label="Administrador"><svg class="i34"><use href="#srvmgr"/></svg></button><button aria-label="PowerShell"><svg class="i28"><use href="#ps"/></svg></button><button aria-label="Explorador"><svg class="i34"><use href="#oldfolder"/></svg></button>
      <div class="vmtray"><svg class="i8" viewBox="0 0 8 8"><path d="M0 6h8L4 1z"/></svg><svg class="i16" viewBox="0 0 16 16"><path d="M8 2h7v13H8zM1 1v3M5 1v3M0 4h6v3H0zM3 7v8" fill="none" stroke="#3d7489" stroke-width="3"/><path d="M8 2h7v13H8zM1 1v3M5 1v3M0 4h6v3H0zM3 7v8" fill="none" stroke="#fff" stroke-width="1.500"/></svg><svg class="i16 wh"><use href="#net"/></svg><svg class="i16" viewBox="0 0 16 16"><path d="M1 5h2l4-4v13l-4-4H1z" fill="#fff" stroke="#567"/><circle cx="11" cy="11" r="5" fill="#d22"/><path d="M9 9l4 4M13 9l-4 4" stroke="#fff" stroke-width="1.500"/></svg><time>10:03<br>30/11/2021</time></div>
    </footer>
  </div>
  <footer class="vbstatus">
    <svg class="i20" viewBox="0 0 20 20"><rect x="2" width="16" height="20" rx="2" fill="#7fc8f5"/><circle cx="10" cy="8" r="6" fill="#fff"/><path d="M9 8l3 1-3 8-2-3z" fill="#2468a8"/></svg>
    <svg class="i20" viewBox="0 0 20 20"><circle cx="10" cy="10" r="9" fill="#7cccf8" stroke="#4aa0d8"/><circle cx="10" cy="10" r="2.500" fill="#fff" stroke="#4a90c0"/></svg>
    <svg class="i20" viewBox="0 0 20 20"><path d="M1 1l5 4h5v8H6l-5 4z" fill="#79b8e8" stroke="#4a90c8"/><path d="M12 3h5v9h-5zM10 11c1 6 8 6 9 0M14 16v3M11 19h7" fill="#bbb" stroke="#999"/></svg>
    <svg class="i20" viewBox="0 0 20 20"><path d="M6 1h13v10H6z" fill="#1e90e0" stroke="#777"/><path d="M1 7h12v9H1z" fill="#0a84ee" stroke="#eee"/><path d="M2 19h11" stroke="#888" stroke-width="2"/></svg>
    <svg class="i20" viewBox="0 0 20 20"><path d="M2 19c0-7 4-12 9-13l3 4c-1 5-4 7-12 9z" fill="#6bbcf0" stroke="#4a90c8"/><path d="M12 5l4-4 3 4-4 4z" fill="#fff" stroke="#888"/></svg>
    <svg class="i20" viewBox="0 0 20 20"><path d="M1 4h9l2-3h6v18H1z" fill="#d6d6d6" stroke="#c2c2c2"/></svg>
    <svg class="i20" viewBox="0 0 20 20"><path d="M1 1h18v15H1zM4 19h12" fill="#d5e9f8" stroke="#888" stroke-width="1.500"/><path d="M4 4h12v9H4z" fill="#fff" stroke="#0a84ee" stroke-width="2.500"/></svg>
    <svg class="i20" viewBox="0 0 20 20"><path d="M1 5h14v12H1z" fill="#0a7ef0"/><path d="M6 1h13v9H6z" fill="#8f9fee" stroke="#6a7ad0"/><path d="M3 19h10" stroke="#888" stroke-width="2"/></svg>
    <svg class="i20" viewBox="0 0 20 20"><path d="M1 1h13v18H1z" fill="#7f90e0" stroke="#4a5ab0" stroke-dasharray="2 1"/><path d="M4 6l3.500 8L11 6" fill="none" stroke="#fff" stroke-width="2"/><path d="M16.500 1h3v18h-3z" fill="#fff" stroke="#000"/></svg>
    <svg class="i20" viewBox="0 0 20 20"><circle cx="10" cy="10" r="9" fill="#7cc4f2" stroke="#4a90c8"/><path d="M13 6l6 5-6 8H9l3-5-3-3z" fill="#8ada2a" stroke="#5aa010"/></svg>
    <svg class="i20" viewBox="0 0 20 20"><rect x="1" y="1" width="18" height="18" rx="2" fill="#7cc8f5" stroke="#4aa0d8"/><path d="M8 4h4v5h4l-6 7-6-7h4z" fill="#0c3c80"/></svg>
    <span>CTRL DERECHA</span>
  </footer>
  <footer class="taskbar">
    <button class="sm" aria-label="Inicio"><svg class="i20"><use href="#win"/></svg></button><button class="sm" aria-label="Buscar"><svg class="i20"><use href="#search"/></svg></button><button class="sm" aria-label="Cortana"><svg class="i20"><use href="#cortana"/></svg></button><button class="sm" aria-label="Vista de tareas"><svg class="i20"><use href="#tasks"/></svg></button>
    <div class="apps"><button aria-label="Edge"><svg><use href="#edge"/></svg></button><button class="run" aria-label="Explorador"><svg><use href="#folder"/></svg></button><button aria-label="Correo"><svg><use href="#mail"/></svg></button><button aria-label="Code"><svg><use href="#vscode"/></svg></button><button aria-label="WhatsApp"><svg><use href="#whats"/></svg></button><button aria-label="Spotify"><svg><use href="#spot"/></svg></button><button aria-label="VirtualBox"><svg><use href="#vbox"/></svg></button><button aria-label="Firefox"><svg><use href="#fox"/></svg></button><button class="act" aria-label="Writer"><svg><use href="#writer"/></svg></button><button class="run" aria-label="Máquina virtual"><svg><use href="#vb64"/></svg></button></div>
    <time class="end">10:03<br>30/11/2021</time>
  </footer>
</section>

<section class="screen">
  <header class="wintitle purple">
    <svg class="i20"><use href="#writer"/></svg><span class="grow">actividadestema6.odt - LibreOffice Writer</span>
    <button class="wc" aria-label="Minimizar"><svg class="i12"><use href="#min"/></svg></button><button class="wc" aria-label="Restaurar"><svg class="i12"><use href="#restore"/></svg></button><button class="wc" aria-label="Cerrar"><svg class="i12"><use href="#close"/></svg></button>
  </header>
  <div class="chrome">
    <nav class="lomenu"><a href="#"><u>A</u>rchivo</a><a href="#"><u>E</u>ditar</a><a href="#"><u>V</u>er</a><a href="#"><u>I</u>nsertar</a><a href="#"><u>F</u>ormato</a><a href="#">E<u>s</u>tilos</a><a href="#"><u>T</u>abla</a><a href="#">Formu<u>l</u>ario</a><a href="#"><u>H</u>erramientas</a><a href="#">Ve<u>n</u>tana</a><a href="#">Ay<u>u</u>da</a>
      <div class="upd"><svg class="i18"><use href="#globe"/></svg><svg class="i9"><use href="#close"/></svg></div></nav>
    <div class="tb">
      <button><svg><use href="#w-new"/></svg></button><svg class="dd"><use href="#caret"/></svg><button><svg><use href="#w-open"/></svg></button><svg class="dd"><use href="#caret"/></svg><button><svg><use href="#w-save"/></svg></button><svg class="dd"><use href="#caret"/></svg><i></i>
      <button><svg><use href="#w-pdf"/></svg></button><button><svg><use href="#w-print"/></svg></button><button><svg><use href="#w-preview"/></svg></button><i></i>
      <button><svg><use href="#w-cut"/></svg></button><button><svg><use href="#w-copy"/></svg></button><button><svg><use href="#w-paste"/></svg></button><svg class="dd"><use href="#caret"/></svg><i></i>
      <button><svg><use href="#w-brush"/></svg></button><i></i>
      <button><svg><use href="#w-undo"/></svg></button><svg class="dd"><use href="#caret"/></svg><button><svg><use href="#w-redo"/></svg></button><svg class="dd off"><use href="#caret"/></svg><i></i>
      <button><svg><use href="#w-find"/></svg></button><button><svg><use href="#w-abc"/></svg></button><button><svg><use href="#w-pil"/></svg></button><i></i>
      <button><svg><use href="#w-table"/></svg></button><svg class="dd"><use href="#caret"/></svg><button><svg><use href="#w-image"/></svg></button><button><svg><use href="#w-chart"/></svg></button><button><svg><use href="#w-box"/></svg></button><i></i>
      <button><svg><use href="#w-break"/></svg></button><button><svg><use href="#w-field"/></svg></button><svg class="dd"><use href="#caret"/></svg><button><svg><use href="#w-omega"/></svg></button><svg class="dd"><use href="#caret"/></svg><i></i>
      <button><svg><use href="#w-link"/></svg></button><button><svg><use href="#w-foot"/></svg></button><button><svg><use href="#w-end"/></svg></button><button><svg><use href="#w-mark"/></svg></button><button><svg><use href="#w-cross"/></svg></button><i></i>
      <button><svg><use href="#w-comment"/></svg></button><button><svg><use href="#w-track"/></svg></button><i></i>
      <button><svg><use href="#w-line"/></svg></button><button><svg><use href="#w-diam"/></svg></button><svg class="dd"><use href="#caret"/></svg><button><svg><use href="#w-shapes"/></svg></button>
    </div>
    <div class="tb">
      <label class="combo wide"><select aria-label="Estilo"><option>Textkörper</option></select><svg><use href="#down"/></svg></label>
      <button><svg><use href="#w-upd"/></svg></button><button><svg><use href="#w-newst"/></svg></button><i></i>
      <label class="combo wide"><select aria-label="Fuente"><option>Calibri</option></select><svg><use href="#down"/></svg></label>
      <label class="combo size"><select aria-label="Tamaño"><option>11 pt</option></select><svg><use href="#down"/></svg></label><i></i>
      <button><svg><use href="#w-bold"/></svg></button><button><svg><use href="#w-ital"/></svg></button><button><svg><use href="#w-under"/></svg></button><button><svg><use href="#w-strike"/></svg></button><i></i>
      <button><svg><use href="#w-sup"/></svg></button><button><svg><use href="#w-sub"/></svg></button><i></i>
      <button><svg><use href="#w-clear"/></svg></button><i></i>
      <button><svg><use href="#w-color"/></svg></button><svg class="dd"><use href="#caret"/></svg><button><svg><use href="#w-high"/></svg></button><svg class="dd"><use href="#caret"/></svg><i></i>
      <button><svg><use href="#w-left"/></svg></button><button><svg><use href="#w-center"/></svg></button><button><svg><use href="#w-right"/></svg></button><button class="sel"><svg><use href="#w-just"/></svg></button><i></i>
      <button><svg><use href="#w-bul"/></svg></button><svg class="dd"><use href="#caret"/></svg><button><svg><use href="#w-num"/></svg></button><svg class="dd"><use href="#caret"/></svg><i></i>
      <button><svg><use href="#w-ind"/></svg></button><button><svg><use href="#w-out"/></svg></button><i></i>
      <button><svg><use href="#w-space"/></svg></button><svg class="dd"><use href="#caret"/></svg><button><svg><use href="#w-inc"/></svg></button><button><svg><use href="#w-dec"/></svg></button>
    </div>
  </div>
  <div class="work">
    <div class="doc">
      <div class="rulerrow">
        <svg class="ruler" viewBox="0 0 1092 20"><path d="M0 0h1092v18H0z" fill="#fff"/><path d="M.5.5h155v17H.5zM947.5.5h144v17h-144z" fill="#f0f0f0" stroke="#999"/>
          <path d="M25 6v5M77 6v5M129 6v5M181 6v5M233 6v5M285 6v5M337 6v5M389 6v5M440 6v5M492 6v5M544 6v5M596 6v5M648 6v5M700 6v5M752 6v5M804 6v5M856 6v5M908 6v5M960 6v5M1011 6v5M1063 6v5" stroke="#999" stroke-width="2"/>
          <path d="M220 15v4M286 15v4M352 15v4M418 15v4M484 15v4M550 15v4M616 15v4M682 15v4M748 15v4M814 15v4M880 15v4M217 18.500h6M283 18.500h6M349 18.500h6M415 18.500h6M481 18.500h6M547 18.500h6M613 18.500h6M679 18.500h6M745 18.500h6M811 18.500h6M877 18.500h6" stroke="#555"/>
          <g font-size="12" fill="#777" text-anchor="middle"><text x="50" y="13">2</text><text x="102" y="13">1</text><text x="207" y="13">1</text><text x="259" y="13">2</text><text x="311" y="13">3</text><text x="363" y="13">4</text><text x="415" y="13">5</text><text x="466" y="13">6</text><text x="518" y="13">7</text><text x="570" y="13">8</text><text x="622" y="13">9</text><text x="674" y="13">10</text><text x="726" y="13">11</text><text x="778" y="13">12</text><text x="830" y="13">13</text><text x="882" y="13">14</text><text x="933" y="13">15</text><text x="984" y="13">16</text><text x="1036" y="13">17</text></g>
          <path d="M115.500.5h12v3l-6 5-6-5zM148.500 18.500h12v-3l-6-5-6 5zM930.500 18.500h12v-3l-6-5-6 5z" fill="#e4e4e4" stroke="#555"/></svg>
        <svg class="tabsel" viewBox="0 0 8 6"><path d="M1 0v5h7" fill="none" stroke="#555" stroke-width="2"/></svg>
      </div>
      <div class="canvas">
        <article class="page">
          <div class="shot">
            <div class="shotbody"><div class="pane"></div><div class="copy"><p>Cree los siguientes grupos de seguridad para la delegación de la administración de servidores<br>DHCP.</p><p>- Administradores de DHCP<br>- Usuarios de DHCP</p></div></div>
            <div class="shotfoot"><button disabled>&lt; Anterior</button><button disabled>Siguiente &gt;</button><span class="mark"><button>Confirmar</button></span><button>Cancelar</button></div>
            <svg class="ptr" viewBox="0 0 12 18"><path d="M.5.5v14l3-3 3 6 2-1-3-6h5z" fill="#fff" stroke="#222"/></svg>
          </div>
          <span class="ibeam"></span><span class="crop l"></span><span class="crop r"></span>
        </article>
        <div class="brk"></div>
        <article class="page next"></article>
      </div>
    </div>
    <div class="scroll"><svg><use href="#up"/></svg><span></span><svg><use href="#down"/></svg></div>
    <div class="split"><span></span></div>
    <nav class="deck"><svg class="dots" viewBox="0 0 4 12"><path d="M1 0h2v2H1zM1 5h2v2H1zM1 10h2v2H1z" fill="#777"/></svg><hr><button><svg><use href="#s-prop"/></svg></button><button><svg><use href="#s-page"/></svg></button><button><svg><use href="#s-style"/></svg></button><button><svg><use href="#s-gal"/></svg></button><button class="on"><svg><use href="#s-nav"/></svg></button></nav>
  </div>
  <div class="find">
    <button class="fx" aria-label="Cerrar"><svg viewBox="0 0 18 18"><circle cx="9" cy="9" r="8.500" fill="#f66f75" stroke="#d93b42"/><path d="M5 5l8 8M13 5l-8 8" stroke="#fff" stroke-width="1.500"/></svg></button>
    <div class="combo search"><input type="text" placeholder="Buscar" aria-label="Buscar"><svg><use href="#down"/></svg></div>
    <button class="ar off"><svg><use href="#up"/></svg></button><button class="ar off"><svg><use href="#down"/></svg></button>
    <button class="all" disabled>Buscar todo</button>
    <label class="chk"><input type="checkbox">Distinguir mayúsculas y minúsculas</label><i></i>
    <button class="fr"><svg><use href="#w-find"/></svg></button><i></i>
    <label class="combo nav"><svg class="pg"><use href="#s-page"/></svg><select aria-label="Navegar por"><option>Página</option></select><svg><use href="#down"/></svg></label>
    <button class="ar"><svg><use href="#up"/></svg></button><button class="ar"><svg><use href="#down"/></svg></button><i></i>
  </div>
  <footer class="lostatus">
    <span class="c1">Página 8 de 10</span><span class="c2">971 palabras, 5.881 caracteres</span><span class="c3">MP0</span><span class="c4">Español (España)</span><span class="c5"></span>
    <span class="c6"><svg class="i16" viewBox="0 0 16 16"><path d="M1 4h8v7H1zM10 2h5M12.500 2v12M10 14h5" fill="none" stroke="#555" stroke-width="1.300"/></svg></span><span class="c6"><svg class="i12" viewBox="0 0 12 12"><path d="M1 1h9l1 2v8H1zM3 1v4h5V1M3 11V8h6v3" fill="none" stroke="#e33" stroke-width="1.300"/></svg></span><span class="c6"></span><span class="grow"></span>
    <span class="views"><svg viewBox="0 0 60 12"><path d="M1 1h4l3 3v7H1z" fill="none" stroke="#1e8bcd" stroke-width="1.300"/><path d="M17 1h4l2 3v7h-6zM26 1h4l2 3v7h-6zM41 11V4l2-3h4v10zM49 11V1h4l2 3v7z" fill="none" stroke="#3a3a38" stroke-width="1.300"/></svg></span>
    <span class="zoom"><b>−</b><input type="range" min="0" max="100" value="50" aria-label="Zoom"><b>+</b></span><span class="pct">110 %</span>
  </footer>
  <footer class="taskbar">
    <button class="sm" aria-label="Inicio"><svg class="i20"><use href="#win"/></svg></button>
    <label class="seek"><svg class="i20"><use href="#search"/></svg><input type="text" placeholder="Escribe aquí para buscar"></label>
    <button class="sm" aria-label="Cortana"><svg class="i20"><use href="#cortana"/></svg></button><button class="sm" aria-label="Vista de tareas"><svg class="i20"><use href="#tasks"/></svg></button>
    <div class="apps"><button aria-label="Edge"><svg><use href="#edge"/></svg></button><button class="run" aria-label="Explorador"><svg><use href="#folder"/></svg></button><button aria-label="Correo"><svg><use href="#mail"/></svg></button><button aria-label="Code"><svg><use href="#vscode"/></svg></button><button aria-label="WhatsApp"><svg><use href="#whats"/></svg></button><button aria-label="Spotify"><svg><use href="#spot"/></svg></button><button aria-label="VirtualBox"><svg><use href="#vbox"/></svg></button><button aria-label="Firefox"><svg><use href="#fox"/></svg></button><button class="act" aria-label="Writer"><svg><use href="#writer"/></svg></button><button class="run" aria-label="Máquina virtual"><svg><use href="#vb64"/></svg></button></div>
    <div class="tray"><svg class="i20"><use href="#people"/></svg><div class="wx"><svg class="i26"><use href="#sun"/></svg><span>14°C</span><span>Mayorm. solea...</span></div><svg class="i16 wh"><use href="#up"/></svg><svg class="i20"><use href="#batt"/></svg><svg class="i20 wh"><use href="#net"/></svg><time>10:03<br>30/11/2021</time><svg class="i20 nt"><use href="#note"/></svg></div>
  </footer>
</section>
</main>
</body>
</html>
```
FILE: styles.css
```css
* { box-sizing: border-box; }
body { margin: 0; font-family: "Open Sans", "Noto Sans", sans-serif; font-size: 14px; color: #000; }
button, input, select { font: inherit; color: inherit; border: 0; background: none; padding: 0; margin: 0; }
a { color: inherit; text-decoration: none; }
h1, h2, h3, p, ul, ol { margin: 0; padding: 0; font-weight: inherit; }
ul, ol { list-style: none; }
svg { display: block; flex: none; }
time { display: block; text-align: center; }
.sprite { position: absolute; width: 0; height: 0; visibility: hidden; }
.grow { flex: 1; }
.i8 { width: 8px; height: 10px; }
.i9 { width: 9px; height: 9px; }
.i12 { width: 12px; height: 12px; }
.i16 { width: 16px; height: 16px; }
.i17 { width: 17px; height: 17px; }
.i18 { width: 18px; height: 18px; }
.i20 { width: 20px; height: 20px; }
.i26 { width: 26px; height: 26px; }
.i28 { width: 28px; height: 26px; }
.i34 { width: 34px; height: 32px; }
.i36 { width: 36px; height: 36px; }
.wh { color: #fff; }

.desk { display: grid; grid-template-columns: 1fr 1fr; height: 100vh; }
.screen { display: flex; flex-direction: column; min-width: 0; overflow: hidden; background: #fff; }

/* barra de título */
.wintitle { display: flex; align-items: center; height: 29px; padding: 0 4px 0 2px; color: #999; gap: 5px; }
.wintitle .wc { width: 54px; display: grid; place-items: center; }
.wintitle.purple { background: #4b0050; color: #fff; }
.vbmenu { display: flex; align-items: center; gap: 16px; height: 26px; padding: 0 8px; color: #999; border-bottom: 1px solid #f0f0f0; }

/* máquina virtual */
.vm { flex: 1; display: flex; flex-direction: column; min-height: 0; background: #f8f8f8; }
.smtitle { display: grid; grid-template-columns: 1fr auto 1fr; align-items: center; height: 23px; padding: 0 3px 0 2px; background: #66caea; }
.smctl { display: flex; justify-content: flex-end; align-self: start; }
.smctl button { display: grid; place-items: center; width: 28px; height: 20px; border: 1px solid #333; border-top: 0; margin-left: -1px; }
.smctl .x { width: 46px; background: #c75050; }
.smhead { display: flex; align-items: center; height: 63px; padding: 0 23px 0 12px; background: #404040; color: #fff; border-bottom: 1px solid #d0d0d0; }
.smhead h1 { font-size: 22px; font-weight: 300; }
.nb { color: #6e6e6e; }
.fwd { margin-left: 3px; transform: scaleX(-1); }
.cr { width: 8px; height: 6px; color: #fff; }
.nb ~ .cr { color: #6e6e6e; margin: 0 39px 0 6px; width: 9px; }
.bc { margin: 0 11px; }
.smtools { display: flex; align-items: center; gap: 13px; color: #c8c8c8; margin-right: 18px; }
.smtools i { width: 1px; height: 18px; background: #c8c8c8; }
.smtools button:last-child { margin: -4px 0 0 8px; }
.flag { width: 18px; height: 24px; }
.smmenu { display: flex; font-size: 11px; gap: 15px; }
.smmenu a:nth-child(n+3) { margin-left: 11px; }
.smbody { flex: 1; display: flex; min-height: 0; }
.side { width: 216px; padding-top: 21px; border-right: 1px solid #ccc; font-size: 13px; color: #333; --hole: #f8f8f8; }
.side a { display: flex; align-items: center; gap: 8px; height: 26px; padding: 0 5px 0 16px; white-space: nowrap; }
.side svg { color: #555; }
.side .on { background: #0072c0; color: #fff; }
.side .on svg { color: #fff; }
.content { flex: 1; padding: 18px 22px 0 27px; min-width: 0; }
.content h2 { font-size: 13px; line-height: 20px; font-weight: 700; color: #666; margin-left: -1px; }
.welcome { display: flex; height: 279px; margin: 18px 0 32px; padding: 1px; border: 1px solid #999; background: #fff; }
.tiles { display: grid; grid-template-rows: repeat(3, 90px); gap: 2px; width: 98px; font-size: 12px; line-height: 16px; }
.tiles a { display: flex; align-items: flex-end; padding: 3px 4px; background: #ffb444; color: #7d4a10; }
.tiles .hot { background: #f46621; color: #fff; }
.welcome ol { flex: 1; padding: 20px 0 0 41px; color: #1f75b8; font-size: 17px; font-weight: 300; }
.welcome li { display: flex; align-items: center; height: 40px; padding-left: 34px; gap: 11px; }
.welcome li b { display: grid; place-items: center; width: 30px; height: 30px; border-radius: 50%; background: #efefef; color: #777; font-weight: 300; }
.welcome .first { height: 36px; padding: 0; margin-bottom: 24px; font-size: 22px; }
.welcome .first b { width: 36px; height: 36px; background: #f46621; color: #fff; }
.hide { align-self: flex-end; font-size: 12px; color: #333; margin: 0 19px 17px 0; }
.sum { display: flex; gap: 10px; font-size: 11px; line-height: 16px; color: #666; margin-left: -1px; }
.cards { display: grid; grid-template-columns: repeat(auto-fill, 235px); gap: 17px; margin: 11px 0 0 1px; }
.card { display: flex; flex-direction: column; height: 249px; border: 1px solid #999; background: #fcfcfc; font-size: 13px; color: #333; --hole: #fcfcfc; }
.card header { display: grid; grid-template-columns: 32px 1fr auto; align-items: center; height: 49px; margin: 0 8px; padding: 0 5px; border-bottom: 3px solid #00c400; color: #555; }
.card h3, .card header span { font-size: 15px; line-height: 22px; color: #111; white-space: nowrap; }
.card.bad header { margin: 0; padding: 0 13px; border: 0; background: #c00000; color: #fff; --hole: #c00000; }
.card.bad h3, .card.bad header span { color: #fff; }
.card ul { padding: 1px 0 0 45px; flex: 1; }
.card li { display: flex; align-items: center; height: 28px; }
.card li svg { margin: 0 12px 0 -32px; }
.card em { width: 28px; height: 24px; margin: 0 9px 0 -37px; background: #c00000; color: #fff; font-style: normal; text-align: center; line-height: 24px; }
.card time { align-self: flex-end; font-size: 12px; color: #666; margin: 0 8px 12px; }
.vmbar { display: flex; height: 40px; background: #66caea; border: 1px solid #555; }
.vmbar button { width: 62px; display: grid; place-items: center; }
.vmbar .st { width: 50px; }
.vmbar .on { width: 60px; background: #a0ddf3; outline: 1px solid #333; }
.vmtray { margin-left: auto; display: flex; align-items: center; gap: 8px; padding-right: 18px; font-size: 11px; line-height: 17px; }
.vmtray time { margin-left: 10px; }
.vbstatus { display: flex; align-items: center; justify-content: flex-end; height: 25px; gap: 3px; padding-right: 2px; background: #f0f0f0; font-size: 12px; }
.vbstatus span { margin-left: 2px; }

/* barra de tareas */
.taskbar { display: flex; height: 50px; color: #fff; background: linear-gradient(90deg, #1b1d20, #222426 25%, #1f2629 45%, #25302f 50%, #23262b 56%, #313537 63%, #202326 77%, #22251f 88%, #1b1d21); font-size: 14px; }
.taskbar button { display: grid; place-items: center; border-bottom: 3px solid transparent; border-top: 3px solid transparent; }
.taskbar .sm { width: 60px; }
.taskbar time { line-height: 24px; padding-top: 1px; }
.taskbar .end { margin: 0 8px 0 auto; }
.apps { display: flex; margin-left: 4px; }
.apps button { width: 62px; padding-right: 2px; }
.apps svg { width: 30px; height: 30px; }
.apps .run { border-image: linear-gradient(#a94cb8, #a94cb8) 3; border-width: 0 0 3px; padding-top: 3px; margin: 0 5px; width: 52px; }
.apps .act { background: #4f5153; border-bottom-color: #a94cb8; }
.seek { display: flex; align-items: center; gap: 14px; flex: none; width: 430px; padding: 0 14px; background: #333; border: 1px solid #555; color: #ddd; font-size: 18px; font-weight: 300; }
.seek input { flex: 1; }
.seek input::placeholder { color: #ccc; }
.tray { margin-left: auto; display: flex; align-items: center; padding-right: 31px; gap: 12px; }
.wx { display: flex; align-items: center; gap: 12px; font-size: 17px; margin: 0 8px 0 30px; }
.nt { margin-left: 12px; }

/* Writer */
.chrome { background: linear-gradient(#fff, #fafafa 60%, #efefef); border-bottom: 1px solid #aaa; height: 105px; }
.lomenu { display: flex; align-items: center; gap: 20px; height: 27px; padding: 0 7px 0 10px; }
.lomenu u { text-underline-offset: 3px; }
.upd { margin-left: auto; display: flex; align-items: center; gap: 7px; color: #666; }
.tb { display: flex; align-items: center; height: 38px; padding-left: 4px; }
.tb button { width: 33px; height: 34px; display: grid; place-items: center; }
.tb button svg { width: 24px; height: 24px; }
.tb i, .find i { width: 1px; height: 22px; background: #c4c4c4; margin: 0 4px 0 3px; }
.dd { width: 8px; height: 5px; margin: 4px 0 0 3px; }
.dd.off { color: #999; }
.sel { background: #c2e0f7; outline: 1px solid #90c8f6; outline-offset: -1px; }
.combo { position: relative; display: flex; align-items: center; height: 28px; border: 1px solid #abadb3; outline: 1px solid #abadb3; outline-offset: -2px; background: #fff; }
.combo select, .combo input { appearance: none; flex: 1; min-width: 0; height: 26px; padding-left: 3px; }
.combo svg:last-child { width: 21px; height: 26px; padding: 9px 5px; background: #e1e1e1; border-left: 1px solid #abadb3; color: #333; pointer-events: none; }
.combo.wide { width: 180px; }
.combo.size { width: 75px; margin-left: 8px; }
.combo .pg { width: 18px; height: 20px; }
.work { flex: 1; display: flex; min-height: 0; background: #dfdfdd; }
.doc { flex: 1; display: flex; flex-direction: column; min-width: 0; }
.rulerrow { position: relative; display: flex; justify-content: center; height: 27px; padding-top: 4px; }
.ruler { width: 1092px; height: 20px; }
.tabsel { position: absolute; left: 9px; top: 9px; width: 8px; height: 6px; }
.canvas { flex: 1; display: flex; flex-direction: column; align-items: center; min-height: 0; overflow: hidden; }
.page { position: relative; flex: none; width: 1094px; height: 713px; background: #fff; border: 1px solid #8e8e8e; border-top: 0; box-shadow: 1px 2px 4px #bbb; }
.page.next { flex: 1; border-top: 1px solid #8e8e8e; border-bottom: 0; }
.brk { width: 1090px; height: 2px; margin: 11px 0 10px; background: repeating-linear-gradient(90deg, #6461b8 0 3px, #b9b7dc 3px 6px); }
.shot { position: relative; display: flex; flex-direction: column; width: 625px; height: 329px; margin-left: 217px; overflow: hidden; background: #fcfcfc; border-right: 1px solid #ccc; border-bottom: 2px solid #7fb2d0; font-family: Roboto, "Open Sans", sans-serif; font-size: 10px; line-height: 13px; color: #333; }
.shotbody { flex: 1; display: flex; }
.pane { width: 156px; margin-bottom: 15px; border-right: 1px solid #ddd; }
.copy { padding-left: 16px; white-space: nowrap; }
.copy p { margin: -4px 0 7px; line-height: 14px; }
.shotfoot { display: flex; align-items: center; justify-content: flex-end; height: 37px; padding-right: 14px; gap: 6px; background: #f0f0f0; border-top: 1px solid #ddd; }
.shotfoot button { width: 63px; height: 19px; border: 1px solid #777; background: #ddd; }
.shotfoot button:disabled { border-color: #bbb; background: #f2f2f2; color: #999; }
.mark { border: 3px solid #f00; padding: 5px 2px 5px 7px; height: 35px; margin: 0 -5px 0 10px; display: flex; }
.ptr { position: absolute; left: 235px; top: 286px; width: 12px; height: 18px; }
.ibeam { position: absolute; left: 121px; top: 378px; width: 1px; height: 24px; background: #000; }
.crop { position: absolute; bottom: 8px; width: 18px; height: 19px; border-top: 1px solid #ccc; }
.crop.l { left: 137px; border-right: 1px solid #ccc; }
.crop.r { right: 127px; border-left: 1px solid #ccc; }
.scroll { display: flex; flex-direction: column; align-items: center; width: 21px; padding: 7px 0; background: #f0f0f0; border-left: 1px solid #fff; }
.scroll svg { width: 12px; height: 8px; stroke-width: 2; color: #444; }
.scroll span { width: 18px; height: 39px; background: #cdcdcd; margin: auto 0 160px; }
.split { display: flex; align-items: center; width: 8px; margin-top: 1px; background: #f0f0f0; border: 1px solid #999; }
.split span { width: 6px; height: 74px; margin-bottom: 4px; background: #555; }
.deck { display: flex; flex-direction: column; align-items: center; width: 40px; padding-top: 14px; background: #efefef; border: solid #aaa; border-width: 1px 0; }
.dots { width: 4px; height: 12px; }
.deck hr { width: 22px; border: 0; border-top: 1px solid #ddd; margin: 12px 0 2px; }
.deck button { width: 32px; height: 32px; margin-bottom: 3px; display: grid; place-items: center; }
.deck button svg { width: 24px; height: 24px; }
.deck .on { border: 1px solid #b5b5b5; border-radius: 3px; }
.find { display: flex; align-items: center; height: 39px; padding-left: 12px; background: #f0f0f0; border-top: 1px solid #aaa; }
.fx svg { width: 18px; height: 18px; }
.search { width: 250px; margin: 0 1px 0 7px; }
.search input::placeholder { color: #777; }
.ar { width: 33px; height: 28px; display: grid; place-items: center; color: #333; }
.ar svg { width: 21px; height: 14px; }
.ar.off { color: #aaa; }
.all { color: #8a8a8a; margin: 0 9px 0 2px; }
.chk { display: flex; align-items: center; gap: 5px; }
.chk input { appearance: none; width: 13px; height: 13px; border: 1px solid #333; background: #fff; }
.fr { width: 35px; display: grid; place-items: center; }
.fr svg { width: 24px; height: 24px; }
.combo.nav { width: 150px; }
.lostatus { display: flex; align-items: center; height: 26px; background: #f0f0f0; border-top: 1px solid #aaa; padding: 2px 0 3px; }
.lostatus span { height: 20px; line-height: 20px; border-right: 1px solid #aaa; display: flex; align-items: center; justify-content: center; white-space: nowrap; }
.lostatus .c1 { width: 254px; justify-content: flex-start; padding-left: 12px; }
.lostatus .c2 { width: 379px; justify-content: flex-start; padding-left: 9px; }
.lostatus .c3 { width: 191px; justify-content: flex-start; padding-left: 10px; }
.lostatus .c4 { width: 273px; }
.lostatus .c5 { width: 70px; }
.lostatus .c6 { width: 31px; }
.views { width: 77px; }
.views svg { width: 60px; height: 12px; }
.zoom { width: 145px; gap: 4px; color: #555; }
.zoom b { font-size: 16px; }
.zoom input { appearance: none; width: 100px; height: 2px; background: #888; }
.zoom input::-webkit-slider-thumb { appearance: none; width: 4px; height: 11px; border: 1px solid #555; background: #eee; }
.lostatus .pct { width: 54px; border: 0; }
```
